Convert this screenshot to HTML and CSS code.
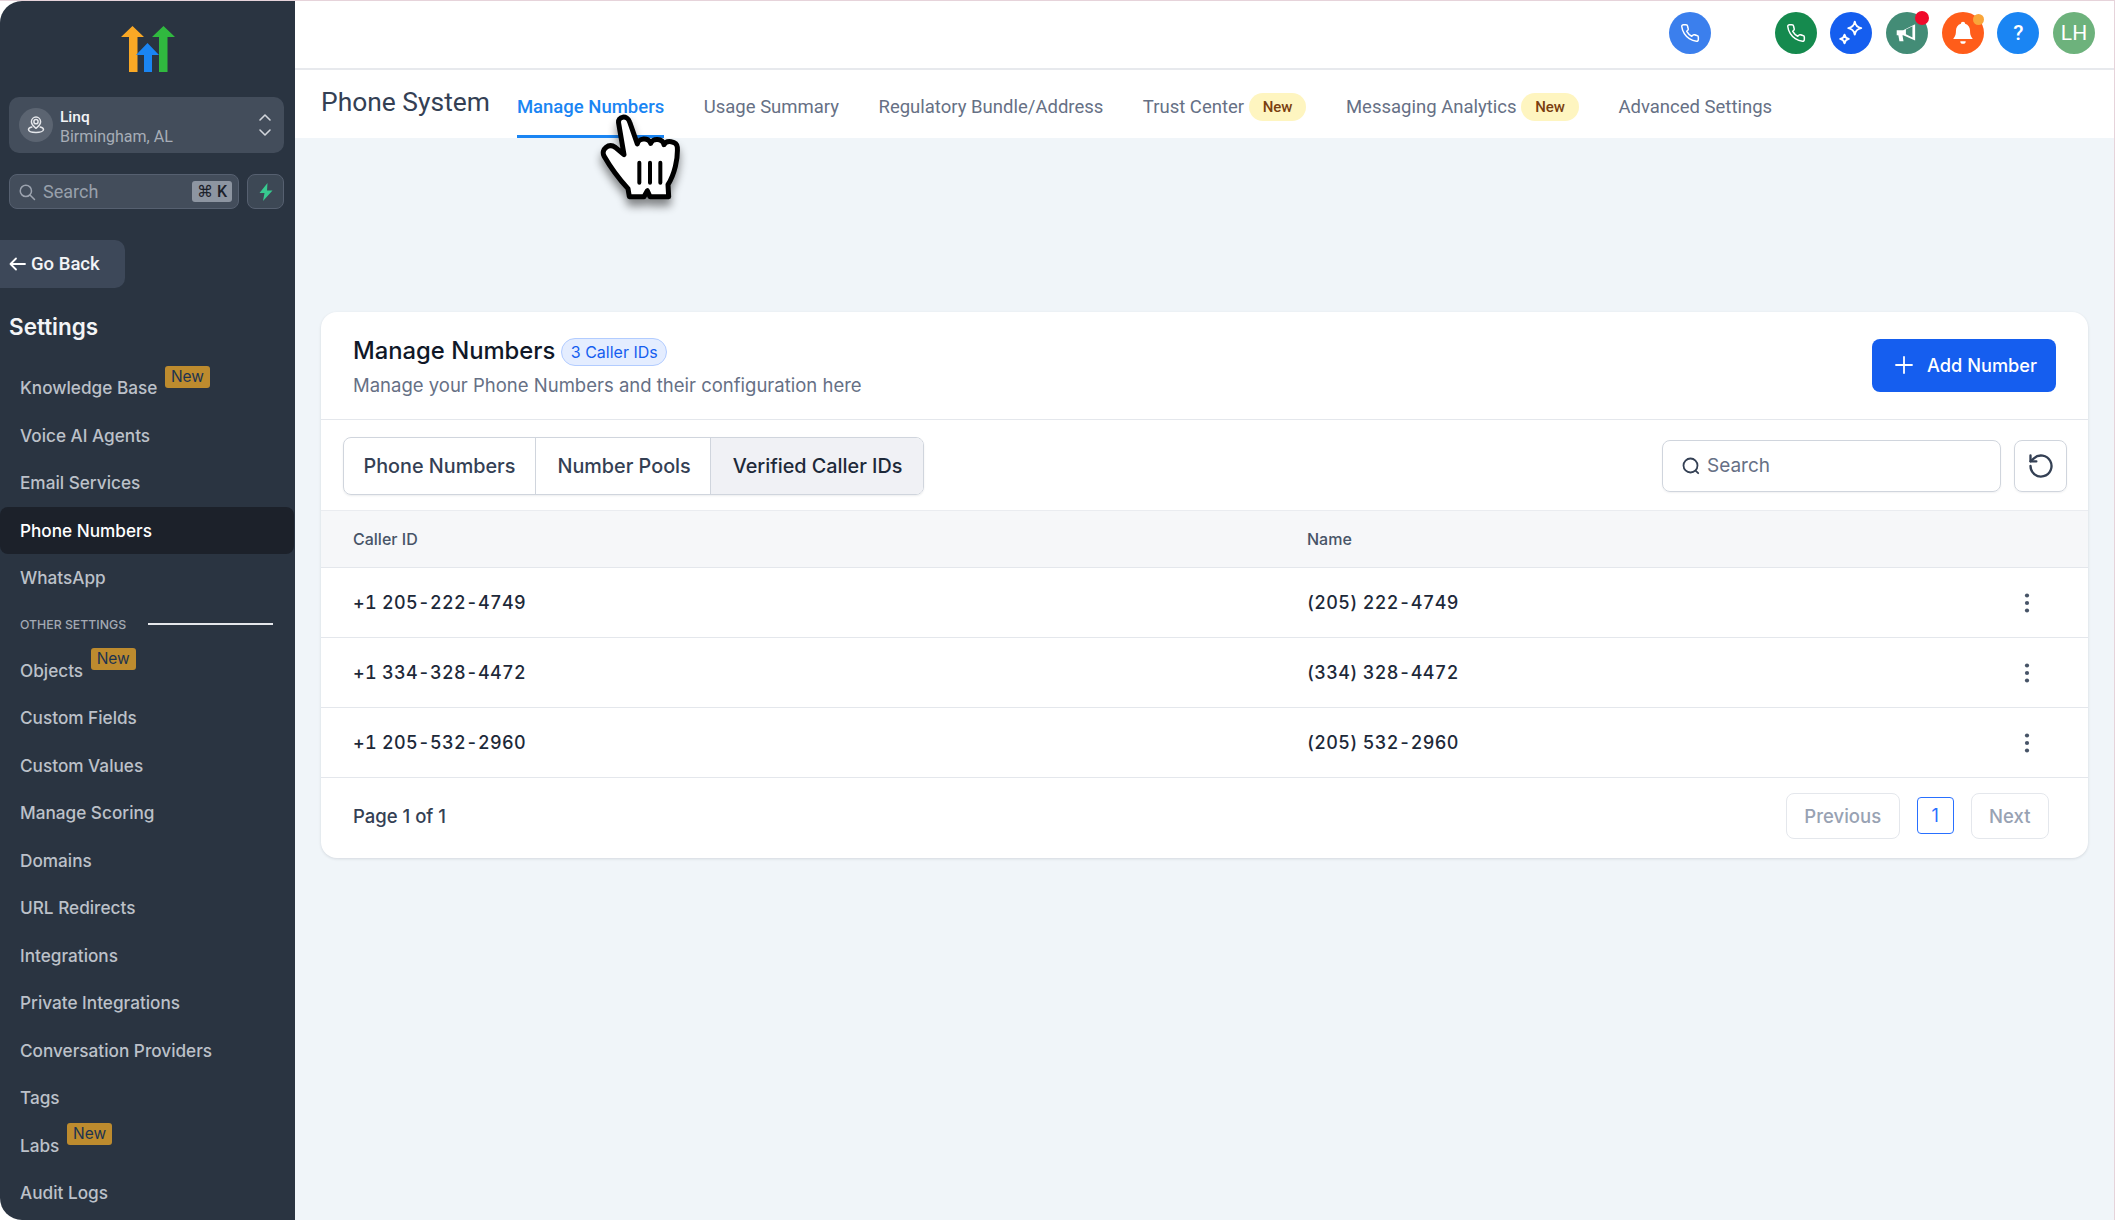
FILE: index.html
```html
<!DOCTYPE html>
<html lang="en">
<head>
    <meta charset="UTF-8">
    <meta name="viewport" content="width=device-width, initial-scale=1.0">
    <title>Phone System</title>
    <link rel="stylesheet" href="styles.css">
</head>
<body>
    <svg class="defs" width="0" height="0">
        <symbol id="ico-phone" viewBox="0 0 24 24"><path fill="none" stroke="currentColor" stroke-width="1.8" stroke-linecap="round" stroke-linejoin="round" d="M22 16.92v3a2 2 0 0 1-2.18 2 19.79 19.79 0 0 1-8.63-3.07 19.5 19.5 0 0 1-6-6 19.79 19.79 0 0 1-3.07-8.67A2 2 0 0 1 4.11 2h3a2 2 0 0 1 2 1.72 12.84 12.84 0 0 0 .7 2.81 2 2 0 0 1-.45 2.11L8.09 9.91a16 16 0 0 0 6 6l1.27-1.27a2 2 0 0 1 2.11-.45 12.84 12.84 0 0 0 2.81.7A2 2 0 0 1 22 16.92z"/></symbol>
        <symbol id="ico-dots" viewBox="0 0 24 24"><circle cx="12" cy="4.5" r="2.1" fill="currentColor"/><circle cx="12" cy="12" r="2.1" fill="currentColor"/><circle cx="12" cy="19.5" r="2.1" fill="currentColor"/></symbol>
    </svg>
    <div class="page">
        <aside class="sidebar">
            <div class="logo">
                <svg width="54" height="48" viewBox="0 0 54 48">
                    <path fill="#f9a825" d="M11.500 1L23 12h-6.500v35H8V12H0z"/>
                    <path fill="#1a85f3" d="M26.500 18L38 30h-7v17h-8V30h-8z"/>
                    <path fill="#30b93f" d="M42.500 1L54 12h-7.500v35H38V12h-7z"/>
                </svg>
            </div>
            <div class="location">
                <span class="location-avatar">
                    <svg width="20" height="20" viewBox="0 0 24 24" fill="none" stroke="#e5e7eb" stroke-width="1.800" stroke-linecap="round" stroke-linejoin="round"><circle cx="12" cy="8" r="2.500"/><path d="M12 16c-3-2.500-5.500-5-5.500-8a5.500 5.500 0 0 1 11 0c0 3-2.500 5.500-5.500 8z"/><path d="M7 14.500c-2.500.6-4 1.700-4 3 0 2 4 3.500 9 3.500s9-1.500 9-3.500c0-1.300-1.500-2.400-4-3"/></svg>
                </span>
                <div class="location-text">
                    <div class="location-name">Linq</div>
                    <div class="location-city">Birmingham, AL</div>
                </div>
                <svg class="location-caret" width="14" height="26" viewBox="0 0 14 26" fill="none" stroke="#d1d5db" stroke-width="1.600" stroke-linecap="round" stroke-linejoin="round"><path d="M2 8l5-5 5 5"/><path d="M2 18l5 5 5-5"/></svg>
            </div>
            <div class="side-search-row">
                <div class="side-search">
                    <svg width="18" height="18" viewBox="0 0 24 24" fill="none" stroke="#9ca3af" stroke-width="2" stroke-linecap="round"><circle cx="10.500" cy="10.500" r="7.500"/><path d="M16 16l6 6"/></svg>
                    <span class="side-search-label">Search</span>
                    <span class="kbd">⌘ K</span>
                </div>
                <div class="bolt-btn">
                    <svg width="16" height="18" viewBox="0 0 16 18"><path fill="#37ca8f" d="M9.500 0L1.500 10H6.500L5 18 14.500 7.500H9z"/></svg>
                </div>
            </div>
            <div class="go-back"><span class="go-back-arrow">
                <svg width="17" height="14" viewBox="0 0 17 14" fill="none" stroke="#fff" stroke-width="1.800" stroke-linecap="round" stroke-linejoin="round"><path d="M16 7H1.500M7 1.500L1.500 7 7 12.500"/></svg>
            </span>Go Back</div>
            <h2 class="side-title">Settings</h2>
            <nav class="side-nav">
                <a class="nav-item">Knowledge Base <span class="nav-new">New</span></a>
                <a class="nav-item">Voice AI Agents</a>
                <a class="nav-item">Email Services</a>
                <a class="nav-item active">Phone Numbers</a>
                <a class="nav-item">WhatsApp</a>
                <div class="nav-section"><span>OTHER SETTINGS</span><i></i></div>
                <a class="nav-item">Objects <span class="nav-new">New</span></a>
                <a class="nav-item">Custom Fields</a>
                <a class="nav-item">Custom Values</a>
                <a class="nav-item">Manage Scoring</a>
                <a class="nav-item">Domains</a>
                <a class="nav-item">URL Redirects</a>
                <a class="nav-item">Integrations</a>
                <a class="nav-item">Private Integrations</a>
                <a class="nav-item">Conversation Providers</a>
                <a class="nav-item">Tags</a>
                <a class="nav-item">Labs <span class="nav-new">New</span></a>
                <a class="nav-item">Audit Logs</a>
            </nav>
        </aside>
        <main class="main">
            <header class="topbar">
                <span class="circle c-call"><svg width="20" height="20"><use href="#ico-phone"/></svg></span>
                <span class="circle c-green"><svg width="20" height="20"><use href="#ico-phone"/></svg></span>
                <span class="circle c-blue">
                    <svg width="28" height="28" viewBox="0 0 26 26" fill="none" stroke="#fff" stroke-width="1.800" stroke-linejoin="round"><path d="M16.500 2.500c.6 3.600 2.200 5.300 6 6-3.800.7-5.400 2.400-6 6-.6-3.600-2.200-5.300-6-6 3.800-.7 5.400-2.400 6-6z"/><path d="M7 14.500c.4 2.400 1.500 3.500 4 4-2.500.5-3.600 1.600-4 4-.4-2.400-1.500-3.500-4-4 2.500-.5 3.600-1.600 4-4z"/></svg>
                </span>
                <span class="circle c-teal">
                    <svg width="26" height="26" viewBox="0 0 24 24"><path fill="#fff" d="M2.500 9.500h6l11-5.500v15l-11-5h-.7l1 5.500H5L4 14H2.500z"/><path fill="#438c76" d="M11 8.800l6-3v10.400l-6-3z"/></svg>
                    <i class="dot dot-red"></i>
                </span>
                <span class="circle c-orange">
                    <svg width="26" height="26" viewBox="0 0 24 24"><path fill="#fff" d="M12 1.500a2 2 0 0 1 2 2c3 .9 4.500 3.500 4.500 6.500 0 4 1 5.500 2.500 7.500H3c1.500-2 2.500-3.500 2.500-7.500 0-3 1.500-5.600 4.500-6.500a2 2 0 0 1 2-2z"/><path fill="#fff" d="M9.500 19.500h5a2.500 2.500 0 0 1-5 0z"/></svg>
                    <i class="dot dot-amber"></i>
                </span>
                <span class="circle c-help">?</span>
                <span class="circle c-user">LH</span>
            </header>
            <div class="subnav">
                <div class="subnav-title">Phone System</div>
                <a class="subtab active">Manage Numbers</a>
                <a class="subtab">Usage Summary</a>
                <a class="subtab">Regulatory Bundle/Address</a>
                <a class="subtab">Trust Center <span class="pill-new">New</span></a>
                <a class="subtab">Messaging Analytics <span class="pill-new">New</span></a>
                <a class="subtab">Advanced Settings</a>
            </div>
            <section class="card">
                <div class="card-head">
                    <div>
                        <div class="card-title-row">
                            <h1>Manage Numbers</h1>
                            <span class="count-badge">3 Caller IDs</span>
                        </div>
                        <p class="card-sub">Manage your Phone Numbers and their configuration here</p>
                    </div>
                    <button class="add-btn">
                        <svg width="20" height="20" viewBox="0 0 20 20" fill="none" stroke="#fff" stroke-width="1.800" stroke-linecap="round"><path d="M10 2v16M2 10h16"/></svg>
                        Add Number
                    </button>
                </div>
                <div class="toolbar">
                    <div class="seg">
                        <span class="seg-item">Phone Numbers</span>
                        <span class="seg-item">Number Pools</span>
                        <span class="seg-item on">Verified Caller IDs</span>
                    </div>
                    <div class="tool-right">
                        <div class="search-box">
                            <svg width="20" height="20" viewBox="0 0 20 20" fill="none" stroke="#344054" stroke-width="1.800" stroke-linecap="round"><circle cx="9.500" cy="9.500" r="7"/><path d="M14.800 14.800l2.400 2.400"/></svg>
                            <span>Search</span>
                        </div>
                        <div class="refresh-btn">
                            <svg width="28" height="28" viewBox="0 0 24 24" fill="none" stroke="#344054" stroke-width="2" stroke-linecap="round" stroke-linejoin="round"><path d="M3 12a9 9 0 1 0 2.900-6.600L3 8"/><path d="M3 3v5h5"/></svg>
                        </div>
                    </div>
                </div>
                <div class="t-row t-head"><span class="col-a">Caller ID</span><span class="col-b">Name</span></div>
                <div class="t-row"><span class="col-a">+1 205-222-4749</span><span class="col-b">(205) 222-4749</span><svg class="kebab" width="24" height="24"><use href="#ico-dots"/></svg></div>
                <div class="t-row"><span class="col-a">+1 334-328-4472</span><span class="col-b">(334) 328-4472</span><svg class="kebab" width="24" height="24"><use href="#ico-dots"/></svg></div>
                <div class="t-row"><span class="col-a">+1 205-532-2960</span><span class="col-b">(205) 532-2960</span><svg class="kebab" width="24" height="24"><use href="#ico-dots"/></svg></div>
                <div class="card-foot">
                    <span class="page-info">Page 1 of 1</span>
                    <div class="pager">
                        <span class="pg-btn">Previous</span>
                        <span class="pg-num">1</span>
                        <span class="pg-btn">Next</span>
                    </div>
                </div>
            </section>
            <svg class="hand" width="120" height="110" viewBox="0 0 360 330">
                <path fill="#fff" stroke="#000" stroke-width="15" stroke-linejoin="round" d="M116 70c-4-22 26-26 33-4l23 66c2-18 34-22 40-2 4-16 36-16 40 4 6-14 38-12 40 8 2 34-8 80-28 112l2 36h-56l-8-18-10 18h-44l-4-24C120 240 88 196 72 168c-10-20 14-40 34-26l26 22z"/>
                <path fill="none" stroke="#000" stroke-width="12" stroke-linecap="round" d="M178 188v60M210 188v60M241 188v60"/>
            </svg>
        </main>
    </div>
</body>
</html>
```

FILE: styles.css
```css
* {
    box-sizing: border-box;
}
html, body {
    margin: 0;
    height: 100%;
    overflow: hidden;
    background: #fff;
}
body {
    font-family: 'Inter', 'Liberation Sans', sans-serif;
}
.defs {
    position: absolute;
}
.page {
    display: flex;
    width: 2115px;
    height: 1220px;
    border-top: 1px solid #e6d3da;
    border-right: 1px solid #e6d3da;
}

/* sidebar */
.sidebar {
    width: 295px;
    flex: none;
    height: 1219px;
    padding-top: 24px;
    background: #2a3441;
    border-radius: 22px 0 0 22px;
    color: #fff;
}
.logo {
    display: flex;
    justify-content: center;
    height: 48px;
}
.location {
    display: flex;
    align-items: center;
    height: 56px;
    margin: 24px 11px 0 9px;
    padding: 0 12px 0 10px;
    background: #434d5b;
    border-radius: 10px;
}
.location-avatar {
    display: flex;
    align-items: center;
    justify-content: center;
    width: 34px;
    height: 34px;
    border-radius: 50%;
    background: #5b6471;
    flex: none;
}
.location-text {
    flex: 1;
    margin-left: 7px;
    padding-top: 3px;
    font-family: 'Roboto', sans-serif;
    line-height: 20px;
}
.location-name {
    font-size: 15.500px;
    font-weight: 500;
    color: #f3f4f6;
}
.location-city {
    font-size: 16px;
    color: #a7adb7;
}
.side-search-row {
    display: flex;
    gap: 8px;
    margin: 21px 11px 0 9px;
}
.side-search {
    display: flex;
    align-items: center;
    flex: 1;
    height: 35px;
    padding: 0 6px 0 8px;
    background: #434d5b;
    border: 1px solid #566070;
    border-radius: 8px;
}
.side-search-label {
    flex: 1;
    margin-left: 7px;
    font-family: 'Roboto', sans-serif;
    font-size: 18px;
    color: #98a0ab;
}
.kbd {
    padding: 1px 5px;
    background: #8d95a1;
    border-radius: 3px;
    font-family: 'Roboto', 'DejaVu Sans', sans-serif;
    font-size: 16px;
    font-weight: 500;
    color: #1c212a;
}
.bolt-btn {
    display: flex;
    align-items: center;
    justify-content: center;
    width: 37px;
    height: 35px;
    background: #3d4855;
    border: 1px solid #566070;
    border-radius: 8px;
}
.go-back {
    display: flex;
    align-items: center;
    width: 125px;
    height: 48px;
    margin-top: 31px;
    padding-left: 9px;
    background: #3d4859;
    border-radius: 0 10px 10px 0;
    font-family: 'Roboto', sans-serif;
    font-size: 18.500px;
    font-weight: 500;
    color: #f3f4f6;
}
.go-back-arrow {
    display: flex;
    margin-right: 5px;
}
.side-title {
    margin: 22px 0 0 9px;
    font-size: 22.500px;
    font-weight: 600;
    line-height: 34px;
    color: #f3f4f6;
}
.side-nav {
    margin-top: 20px;
}
.nav-item {
    display: flex;
    align-items: center;
    height: 47.500px;
    padding-left: 20px;
    font-size: 17.200px;
    font-weight: 500;
    color: #bcc1c9;
    white-space: pre;
}
.nav-item.active {
    margin-right: 1px;
    background: #1c212a;
    border-radius: 8px;
    color: #fff;
}
.nav-new {
    position: relative;
    top: -11px;
    margin-left: 3px;
    padding: 1px 6px;
    background: #bd8b2e;
    border-radius: 3px;
    font-size: 15.500px;
    line-height: 20px;
    font-weight: 400;
    color: #1c3350;
}
.nav-section {
    display: flex;
    align-items: center;
    height: 45px;
    padding: 0 22px 0 20px;
    font-size: 12.300px;
    font-weight: 500;
    color: #a3a9b3;
}
.nav-section i {
    flex: 1;
    height: 2px;
    margin-left: 22px;
    background: #e5e7eb;
}

/* main */
.main {
    position: relative;
    flex: 1;
    background: #f0f5f9;
}
.topbar {
    display: flex;
    align-items: center;
    justify-content: flex-end;
    gap: 13.700px;
    height: 69px;
    padding: 0 19px 4px 0;
    background: #fff;
    border-bottom: 2px solid #e7e9ed;
}
.circle {
    position: relative;
    display: flex;
    align-items: center;
    justify-content: center;
    width: 42px;
    height: 42px;
    border-radius: 50%;
    color: #fff;
    font-family: 'Roboto', sans-serif;
    font-size: 21px;
}
.c-call { background: #3b7fed; margin-right: 50px; }
.c-green { background: #158a4e; }
.c-blue { background: #155eef; }
.c-teal { background: #438c76; }
.c-orange { background: #ff5d1a; }
.c-help { background: #1a85f3; font-weight: 500; }
.c-user { background: #6db27c; }
.dot {
    position: absolute;
    border-radius: 50%;
}
.dot-red {
    top: -1px;
    right: -1px;
    width: 14px;
    height: 14px;
    background: #f00a2a;
}
.dot-amber {
    top: 2px;
    right: 0;
    width: 11px;
    height: 11px;
    background: #f9a63a;
}
.subnav {
    display: flex;
    align-items: stretch;
    gap: 39.500px;
    height: 68px;
    padding-left: 26px;
    background: #fff;
    font-family: 'Roboto', sans-serif;
}
.subnav-title {
    display: flex;
    align-items: center;
    margin-right: -12.500px;
    padding-bottom: 4px;
    font-size: 26.400px;
    color: #344054;
}
.subtab {
    display: flex;
    align-items: center;
    padding-top: 9px;
    border-bottom: 3px solid transparent;
    font-size: 18.500px;
    color: #667085;
    white-space: pre;
}
.subtab.active {
    border-bottom-color: #1a85f3;
    color: #1a85f3;
    font-weight: 500;
}
.pill-new {
    margin-left: 0;
    padding: 0 14px;
    background: #fef5c0;
    border-radius: 14px;
    font-size: 15px;
    font-weight: 500;
    line-height: 28px;
    color: #7a3f10;
}
.card {
    margin: 174px 26px 0;
    height: 546px;
    background: #fff;
    border-radius: 16px;
    box-shadow: 0 1px 3px rgba(16,24,40,0.12);
    overflow: hidden;
}
.card-head {
    display: flex;
    align-items: flex-start;
    justify-content: space-between;
    height: 108px;
    padding: 24px 32px 0;
    border-bottom: 1px solid #e4e7ec;
}
.card-title-row {
    display: flex;
    align-items: center;
    gap: 6px;
}
h1 {
    margin: 0;
    font-size: 23.800px;
    font-weight: 500;
    line-height: 30px;
    color: #101828;
}
.count-badge {
    margin-top: 2px;
    padding: 0 8.500px;
    background: #e4edff;
    border: 1.500px solid #b2ccff;
    border-radius: 14px;
    font-size: 16px;
    line-height: 26px;
    color: #155eef;
}
.card-sub {
    margin: 7px 0 0;
    font-size: 18.500px;
    line-height: 24px;
    color: #667085;
}
.add-btn {
    display: flex;
    align-items: center;
    gap: 13px;
    height: 53px;
    margin: 3px 0 0;
    padding: 0 19px 1px 22px;
    background: #155eef;
    border: none;
    border-radius: 8px;
    font-family: inherit;
    font-size: 18.200px;
    font-weight: 500;
    color: #fff;
}
.toolbar {
    display: flex;
    align-items: center;
    justify-content: space-between;
    height: 91px;
    padding: 1px 21px 0 22px;
    border-bottom: 1px solid #eaecf0;
}
.seg {
    display: flex;
    height: 58px;
    border: 1.500px solid #d0d5dd;
    border-radius: 8px;
    box-shadow: 0 1px 2px rgba(16,24,40,0.08);
    overflow: hidden;
}
.seg-item {
    display: flex;
    align-items: center;
    padding: 0 19.500px;
    font-size: 19.800px;
    font-weight: 500;
    color: #344054;
}
.seg-item + .seg-item {
    padding: 0 19.500px 0 21.500px;
    border-left: 1.500px solid #d0d5dd;
}
.seg-item.on {
    padding: 0 20.500px 0 21.500px;
    background: #f0f1f5;
    color: #1d2939;
}
.tool-right {
    display: flex;
    gap: 13px;
}
.search-box {
    display: flex;
    align-items: center;
    gap: 6px;
    width: 339px;
    height: 52px;
    padding-left: 18px;
    border: 1.500px solid #d0d5dd;
    border-radius: 8px;
    box-shadow: 0 1px 2px rgba(16,24,40,0.06);
    font-size: 19px;
    color: #667085;
}
.refresh-btn {
    display: flex;
    align-items: center;
    justify-content: center;
    width: 53px;
    height: 52px;
    border: 1.500px solid #d0d5dd;
    border-radius: 8px;
    box-shadow: 0 1px 2px rgba(16,24,40,0.06);
}
.t-row {
    position: relative;
    display: flex;
    align-items: center;
    height: 70px;
    padding-left: 32px;
    border-bottom: 1px solid #e4e7ec;
    font-size: 18px;
    font-weight: 500;
    letter-spacing: 0.320px;
    font-variant-numeric: tabular-nums;
    color: #1d2939;
}
.t-head {
    height: 57px;
    background: #f6f7f9;
    font-size: 16px;
    letter-spacing: 0;
    color: #475467;
}
.col-a {
    width: 954px;
}
.kebab {
    margin-left: auto;
    margin-right: 49px;
    color: #475467;
}
.col-b {
    flex: none;
}
.card-foot {
    display: flex;
    align-items: center;
    justify-content: space-between;
    height: 75px;
    padding: 0 39px 0 32px;
}
.page-info {
    font-size: 18.500px;
    font-weight: 500;
    color: #344054;
}
.pager {
    display: flex;
    align-items: center;
    gap: 17px;
}
.pg-btn {
    display: flex;
    align-items: center;
    height: 46px;
    padding: 0 17.500px;
    border: 1.500px solid #e4e7ec;
    border-radius: 8px;
    font-size: 18.500px;
    font-weight: 500;
    color: #98a2b3;
}
.pg-num {
    display: flex;
    align-items: center;
    justify-content: center;
    width: 37px;
    height: 37px;
    border: 1.500px solid #2970ff;
    border-radius: 4px;
    font-size: 18px;
    color: #2970ff;
}
.hand {
    position: absolute;
    left: 285px;
    top: 99px;
    filter: drop-shadow(0 7px 4px rgba(0,0,0,0.45));
}
```
